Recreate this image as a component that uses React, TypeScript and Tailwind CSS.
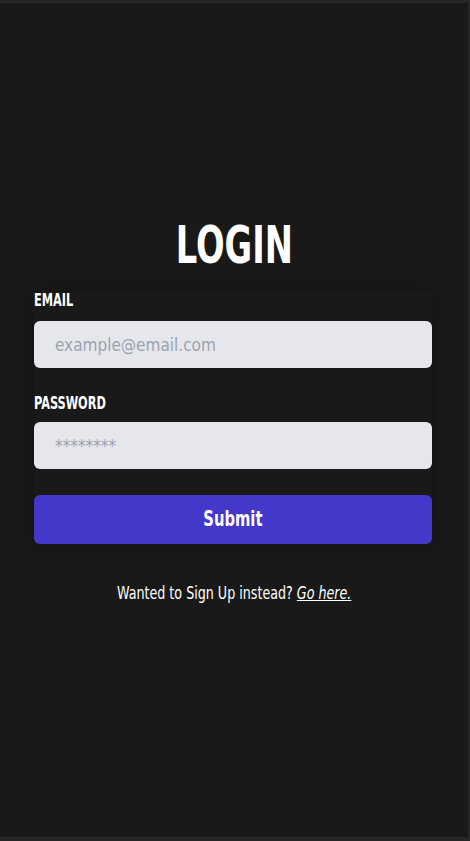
import React, { useState } from 'react'

const font = { fontFamily: '"Liberation Sans Narrow", "DejaVu Sans Condensed", "Roboto", sans-serif' }

export default function App(): React.JSX.Element {
  const [email, setEmail] = useState('')
  const [password, setPassword] = useState('')

  return (
    <div
      style={font}
      className="h-[841px] w-[470px] bg-[#191919] border-t-[3px] border-r-2 border-b-4 border-[#262628] text-white flex flex-col"
    >
      <div className="flex flex-col items-center pt-[216px]">
        <h1 className="text-[52px] font-bold leading-none">
          <span className="inline-block scale-x-[0.72]">LOGIN</span>
        </h1>

        <form
          className="w-[398px] mt-[21px] -translate-x-px flex flex-col shadow-[0_0_20px_rgba(0,0,0,0.25)]"
          onSubmit={(e) => e.preventDefault()}
        >
          <label className="text-[17px] font-bold leading-none mb-[12px]">
            <span className="inline-block origin-left scale-x-[0.74]">EMAIL</span>
          </label>
          <input
            type="email"
            value={email}
            onChange={(e) => setEmail(e.target.value)}
            placeholder="example@email.com"
            className="h-[47px] rounded-md bg-[#e5e7eb] px-[21px] text-[17px] text-gray-700 placeholder:text-[#9ca3af] outline-none"
          />

          <label className="text-[17px] font-bold leading-none mt-[27px] mb-[10px]">
            <span className="inline-block origin-left scale-x-[0.74]">PASSWORD</span>
          </label>
          <input
            type="password"
            value={password}
            onChange={(e) => setPassword(e.target.value)}
            placeholder="********"
            className="h-[47px] rounded-md bg-[#e5e7eb] px-[21px] text-[17px] text-gray-700 placeholder:text-[#9ca3af] outline-none"
          />

          <button
            type="submit"
            className="mt-[26px] h-[49px] rounded-md bg-[#4338ca] text-[21px] font-bold text-white"
          >
            <span className="inline-block scale-x-[0.78]">Submit</span>
          </button>
        </form>

        <p className="mt-[37px] text-[17px]">
          <span className="inline-block scale-x-[0.83]">
            Wanted to Sign Up instead?{' '}
            <a href="#" className="italic underline">
              Go here.
            </a>
          </span>
        </p>
      </div>
    </div>
  )
}
